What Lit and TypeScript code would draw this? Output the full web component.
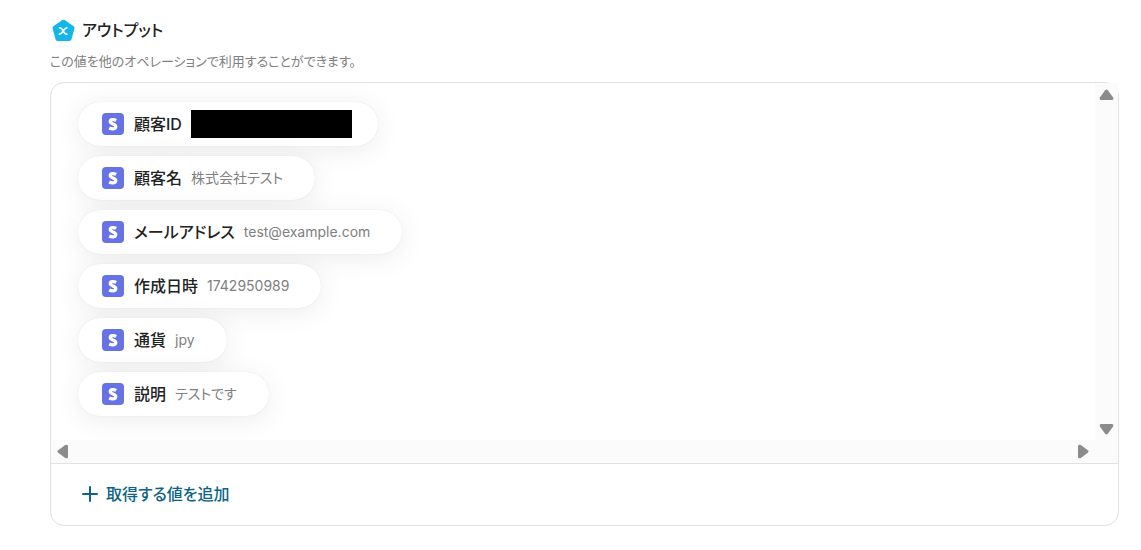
import { LitElement, html, css, svg, nothing } from "lit";
import { customElement } from "lit/decorators.js";

interface OutputItem {
  label: string;
  value: string;
  masked?: boolean;
}

const ITEMS: OutputItem[] = [
  { label: "顧客ID", value: "", masked: true },
  { label: "顧客名", value: "株式会社テスト" },
  { label: "メールアドレス", value: "test@example.com" },
  { label: "作成日時", value: "1742950989" },
  { label: "通貨", value: "jpy" },
  { label: "説明", value: "テストです" },
];

const ARROWS: Record<string, string> = {
  up: "M6.2 2.2Q7.5 .6 8.8 2.2L14 9.2Q15 12 12.8 12H2.2Q0 12 1 9.2Z",
  down: "M6.2 11.8Q7.5 13.4 8.8 11.8L14 4.8Q15 2 12.8 2H2.2Q0 2 1 4.8Z",
  left: "M2.2 6.2Q.6 7.5 2.2 8.8L9.2 14Q12 15 12 12.8V2.2Q12 0 9.2 1Z",
  right: "M11.8 6.2Q13.4 7.5 11.8 8.8L4.8 14Q2 15 2 12.8V2.2Q2 0 4.8 1Z",
};

@customElement("output-pill")
export class OutputPill extends LitElement {
  static properties = { item: { attribute: false } };
  declare item: OutputItem;

  static styles = css`
    :host {
      display: block;
    }
    .pill {
      display: flex;
      align-items: center;
      box-sizing: border-box;
      width: fit-content;
      height: 44px;
      padding: 0 32px 0 24px;
      border-radius: 22px;
      background: #fff;
      box-shadow:
        0 0 1px rgba(0, 0, 0, 0.12),
        0 4px 28px rgba(0, 0, 0, 0.08);
    }
    .pill.masked {
      padding-right: 26px;
    }
    .icon {
      flex: none;
      width: 22px;
      height: 22px;
      margin-right: 10px;
    }
    .label {
      margin-right: 9px;
      font-size: 16px;
      line-height: 24px;
      font-weight: 500;
      color: #222;
    }
    .value {
      font-size: 14px;
      line-height: 20px;
      color: #808080;
    }
    .mask {
      width: 161px;
      height: 28px;
      background: #000;
    }
  `;

  render() {
    const { label, value, masked } = this.item;
    return html`<div class="pill ${masked ? "masked" : ""}">
      <svg class="icon" viewBox="0 0 22 22" aria-hidden="true">
        <rect width="22" height="22" rx="4" fill="#6772e5" />
        <path
          fill="none"
          stroke="#fff"
          stroke-width="3.2"
          d="M14.200 7.300C12.500 6.400 8.200 5.800 8.200 8.600C8.200 11.300 13.800 10.500 13.800 13.600C13.800 16.600 9.500 16.200 7.200 15"
        />
      </svg>
      <span class="label">${label}</span>
      ${masked ? html`<span class="mask"></span>` : nothing}
      ${value ? html`<span class="value">${value}</span>` : nothing}
    </div>`;
  }
}

@customElement("app-root")
export class AppRoot extends LitElement {
  static styles = css`
    :host {
      display: block;
      padding: 17px 22px 24px 50px;
      background: #fff;
      color: #222;
      font-family: Inter, "Noto Sans CJK JP", sans-serif;
      font-feature-settings: "palt";
    }
    .heading {
      display: flex;
      align-items: center;
      gap: 6px;
      margin: 0;
      font-size: 16px;
      line-height: 24px;
      font-weight: 500;
    }
    .badge {
      width: 26px;
      height: 26px;
    }
    .note {
      margin: 9px 0 12px;
      font-size: 13px;
      line-height: 18px;
      color: #808080;
    }
    .card {
      border: 1px solid #e2e2e2;
      border-radius: 14px;
    }
    .scroller {
      display: grid;
      grid-template-columns: minmax(0, 1fr) 23px;
      grid-template-rows: auto 23px;
      border-bottom: 1px solid #e2e2e2;
    }
    .list {
      display: flex;
      flex-direction: column;
      gap: 10px;
      margin: 0;
      padding: 19px 27px 24px;
      list-style: none;
      overflow: hidden;
      border-top-left-radius: 13px;
    }
    .track {
      display: flex;
      justify-content: space-between;
      align-items: center;
      background: #fbfbfb;
    }
    .vertical {
      flex-direction: column;
      padding: 5px 0 4px;
    }
    .horizontal {
      padding: 0 5px;
    }
    .corner {
      background: #fbfbfb;
    }
    .arrow {
      display: flex;
      padding: 0;
      border: 0;
      background: none;
    }
    .vertical svg {
      width: 15px;
      height: 14px;
    }
    .horizontal svg {
      width: 14px;
      height: 15px;
    }
    .footer {
      padding: 18px 31px 19px;
    }
    .add {
      display: flex;
      align-items: center;
      gap: 8px;
      padding: 0;
      border: 0;
      background: none;
      color: #0b6586;
      font: inherit;
      font-feature-settings: inherit;
      font-size: 16px;
      line-height: 24px;
      font-weight: 500;
      cursor: pointer;
    }
    .plus {
      width: 16px;
      height: 16px;
    }
  `;

  private arrow(dir: string, label: string) {
    const box = dir === "up" || dir === "down" ? "0 0 15 14" : "0 0 14 15";
    return html`<button class="arrow" type="button" aria-label=${label}>
      <svg viewBox=${box}>${svg`<path fill="#8b8b8b" d=${ARROWS[dir]} />`}</svg>
    </button>`;
  }

  render() {
    return html`
      <h2 class="heading">
        <svg class="badge" viewBox="0 0 26 26" aria-hidden="true">
          <path
            fill="#12b7ea"
            stroke="#12b7ea"
            stroke-width="4"
            stroke-linejoin="round"
            d="M13.500 4.700L22.500 11L19.500 22H7.500L4.500 11Z"
          />
          <path
            fill="none"
            stroke="#fff"
            stroke-width="1.700"
            stroke-linecap="round"
            d="M9.500 10.800C11.300 10.500 11.800 11.300 13.200 14C14.500 16.700 15.200 17.300 16.800 17.200M16.800 10.800C15.300 10.800 14.600 11.800 13.200 14C11.800 16.200 11 17.300 9.500 17.200"
          />
        </svg>
        アウトプット
      </h2>
      <p class="note">この値を他のオペレーションで利用することができます。</p>
      <section class="card">
        <div class="scroller">
          <ul class="list">
            ${ITEMS.map((item) => html`<li><output-pill .item=${item}></output-pill></li>`)}
          </ul>
          <div class="track vertical">
            ${this.arrow("up", "上へスクロール")}${this.arrow("down", "下へスクロール")}
          </div>
          <div class="track horizontal">
            ${this.arrow("left", "左へスクロール")}${this.arrow("right", "右へスクロール")}
          </div>
          <div class="corner"></div>
        </div>
        <div class="footer">
          <button class="add" type="button">
            <svg class="plus" viewBox="0 0 16 16" aria-hidden="true">
              <path d="M8 1v14M1 8h14" fill="none" stroke="currentColor" stroke-width="2" stroke-linecap="round" />
            </svg>
            取得する値を追加
          </button>
        </div>
      </section>
    `;
  }
}
